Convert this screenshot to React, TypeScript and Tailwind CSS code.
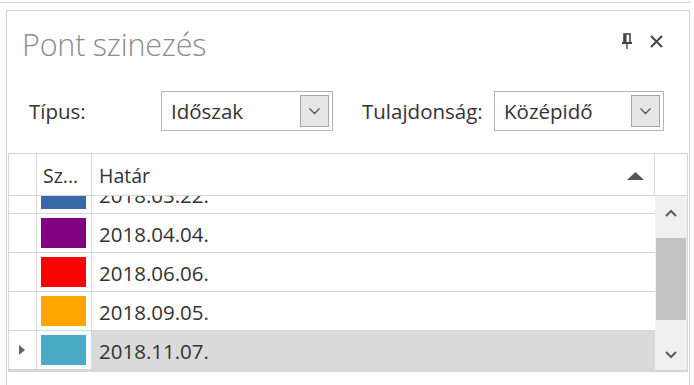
import React from "react";

const rows = [
  { color: "#3a69a8", date: "2018.03.22." },
  { color: "#800080", date: "2018.04.04." },
  { color: "#ff0000", date: "2018.06.06." },
  { color: "#ffa500", date: "2018.09.05." },
  { color: "#4aabc6", date: "2018.11.07.", selected: true },
];

function Chevron({ up = false }: { up?: boolean }) {
  return (
    <svg width="12" height="8" viewBox="0 0 12 8">
      <path
        d={up ? "M1 7 L6 2 L11 7" : "M1 1 L6 6 L11 1"}
        fill="none"
        stroke="#5a5a5a"
        strokeWidth="2"
      />
    </svg>
  );
}

function Dropdown({ text, width }: { text: string; width: string }) {
  return (
    <div className={`${width} h-[40px] border border-[#b4b4b4] bg-white flex items-center pl-[9px] pr-[3px]`}>
      <span className="flex-1 text-[20.5px] text-[#333]">{text}</span>
      <div className="w-[29px] h-[32px] border border-[#a6a6a6] bg-[#e6e6e6] flex items-center justify-center">
        <svg width="11" height="7" viewBox="0 0 11 7">
          <path d="M0.5 0.5 L5.5 5.5 L10.5 0.5" fill="none" stroke="#555" strokeWidth="1.3" />
        </svg>
      </div>
    </div>
  );
}

export default function App() {
  return (
    <div
      className="w-[694px] h-[385px] bg-white overflow-hidden"
      style={{ fontFamily: "'Open Sans', 'Noto Sans', sans-serif" }}
    >
      <div className="h-[3px] w-[690px] border-b border-r border-[#d6d6d6]" />
      <div className="mt-[7px] ml-[6px] w-[684px] h-[375px] border border-b-0 border-[#d4d4d4]">
        {/* title */}
        <div className="h-[68px] flex items-start pl-[15px] pr-[26px] pt-[13px]">
          <span className="flex-1 text-[30.5px] font-light text-[#8c8c8c] leading-[40px] tracking-[-0.2px]">
            Pont szinezés
          </span>
          <div className="flex items-center gap-[17px] pt-[9px]">
            <svg width="12" height="16" viewBox="0 0 12 16">
              <rect x="3" y="1" width="6" height="9" fill="none" stroke="#444" strokeWidth="1.6" />
              <rect x="3" y="1" width="2.5" height="9" fill="#444" />
              <rect x="1" y="9" width="10" height="2" fill="#444" />
              <rect x="5.3" y="11" width="1.4" height="5" fill="#444" />
            </svg>
            <svg width="13" height="13" viewBox="0 0 13 13">
              <path d="M1 1 L12 12 M12 1 L1 12" stroke="#444" strokeWidth="2" />
            </svg>
          </div>
        </div>
        {/* filters */}
        <div className="h-[40px] mt-[12px] flex items-center">
          <span className="ml-[22px] w-[132px] text-[20.5px] text-[#333]">Típus:</span>
          <Dropdown text="Időszak" width="w-[172px]" />
          <span className="ml-[29px] w-[132px] text-[20.5px] text-[#333]">Tulajdonság:</span>
          <Dropdown text="Középidő" width="w-[170px]" />
        </div>
        {/* grid */}
        <div className="mt-[22px] ml-[1px] w-[680px] border border-[#d6d6d6] border-b-[2px] text-[19.5px] text-[#333]">
          {/* header */}
          <div className="h-[42px] flex border-b border-[#d6d6d6]">
            <div className="w-[28px] border-r border-[#d6d6d6]" />
            <div className="w-[55px] border-r border-[#d6d6d6] pl-[6px] flex items-center pt-[2px]">Sz...</div>
            <div className="w-[563px] border-r border-[#d6d6d6] pl-[7px] flex items-center pt-[2px]">
              <span className="flex-1">Határ</span>
              <svg width="17" height="8" viewBox="0 0 17 8" className="mr-[10px]">
                <path d="M0 8 L8.5 0 L17 8 Z" fill="#555" />
              </svg>
            </div>
            <div className="flex-1" />
          </div>
          {/* body */}
          <div className="h-[174px] flex">
            <div className="w-[646px] h-full overflow-hidden">
              <div className="mt-[-21px]">
                {rows.map((r) => (
                  <div key={r.date} className="h-[39px] flex border-b border-[#d6d6d6]">
                    <div className="w-[28px] border-r border-[#d6d6d6] flex items-center pl-[10px]">
                      {r.selected && (
                        <svg width="6" height="10" viewBox="0 0 6 10">
                          <path d="M0 0 L6 5 L0 10 Z" fill="#666" />
                        </svg>
                      )}
                    </div>
                    <div className="w-[55px] border-r border-[#d6d6d6] flex items-center pl-[4px]">
                      <div className="w-[45px] h-[30px]" style={{ backgroundColor: r.color }} />
                    </div>
                    <div
                      className={`flex-1 flex items-center pl-[7px] pt-[2px] text-[20.5px] ${r.selected ? "bg-[#dadada]" : ""}`}
                    >
                      {r.date}
                    </div>
                  </div>
                ))}
              </div>
            </div>
            <div className="flex-1 bg-[#f0f0f0] flex flex-col items-center">
              <div className="h-[42px] flex items-start pt-[13px]">
                <Chevron up />
              </div>
              <div className="w-[30px] h-[82px] bg-[#c2c2c2]" />
              <div className="flex-1 flex items-end pb-[11px]">
                <Chevron />
              </div>
            </div>
          </div>
        </div>
      </div>
    </div>
  );
}
